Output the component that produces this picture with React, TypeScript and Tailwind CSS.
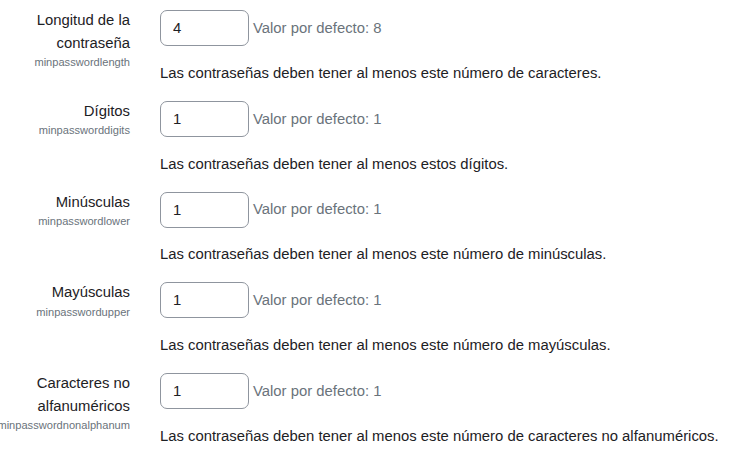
import React from 'react';

type Setting = {
  label: string[];
  name: string;
  value: string;
  def: string;
  desc: string;
};

const settings: Setting[] = [
  {
    label: ['Longitud de la', 'contraseña'],
    name: 'minpasswordlength',
    value: '4',
    def: '8',
    desc: 'Las contraseñas deben tener al menos este número de caracteres.',
  },
  {
    label: ['Dígitos'],
    name: 'minpassworddigits',
    value: '1',
    def: '1',
    desc: 'Las contraseñas deben tener al menos estos dígitos.',
  },
  {
    label: ['Minúsculas'],
    name: 'minpasswordlower',
    value: '1',
    def: '1',
    desc: 'Las contraseñas deben tener al menos este número de minúsculas.',
  },
  {
    label: ['Mayúsculas'],
    name: 'minpasswordupper',
    value: '1',
    def: '1',
    desc: 'Las contraseñas deben tener al menos este número de mayúsculas.',
  },
  {
    label: ['Caracteres no', 'alfanuméricos'],
    name: 'minpasswordnonalphanum',
    value: '1',
    def: '1',
    desc: 'Las contraseñas deben tener al menos este número de caracteres no alfanuméricos.',
  },
];

export default function App() {
  return (
    <div
      className="w-[752px] h-[460px] overflow-hidden bg-white pt-[9px] text-[14.85px] leading-[22.5px] text-[#1d2125]"
      style={{ fontFamily: '"Liberation Sans", Arial, sans-serif' }}
    >
      {settings.map((s) => (
        <div key={s.name} className="flex items-start gap-[30px] h-[90.75px]">
          {/* label column */}
          <div className="w-[130px] shrink-0 flex flex-col items-end text-right">
            {s.label.map((l) => (
              <span key={l} className="whitespace-nowrap">{l}</span>
            ))}
            <span className="whitespace-nowrap text-[11.1px] leading-[17px] text-[#6a737b]">
              {s.name}
            </span>
          </div>

          {/* setting column */}
          <div className="flex flex-col">
            <div className="flex items-center mt-[1px]">
              <input
                type="text"
                defaultValue={s.value}
                className="w-[89px] h-[36px] rounded-[7px] border border-[#8f959e] bg-white px-[12px] text-[14.85px] text-[#1d2125] outline-none"
                style={{ fontFamily: '"Liberation Sans", Arial, sans-serif' }}
              />
              <span className="ml-[4px] text-[#6a737b]">Valor por defecto: {s.def}</span>
            </div>
            <p className="mt-[15.75px] whitespace-nowrap">{s.desc}</p>
          </div>
        </div>
      ))}
    </div>
  );
}
